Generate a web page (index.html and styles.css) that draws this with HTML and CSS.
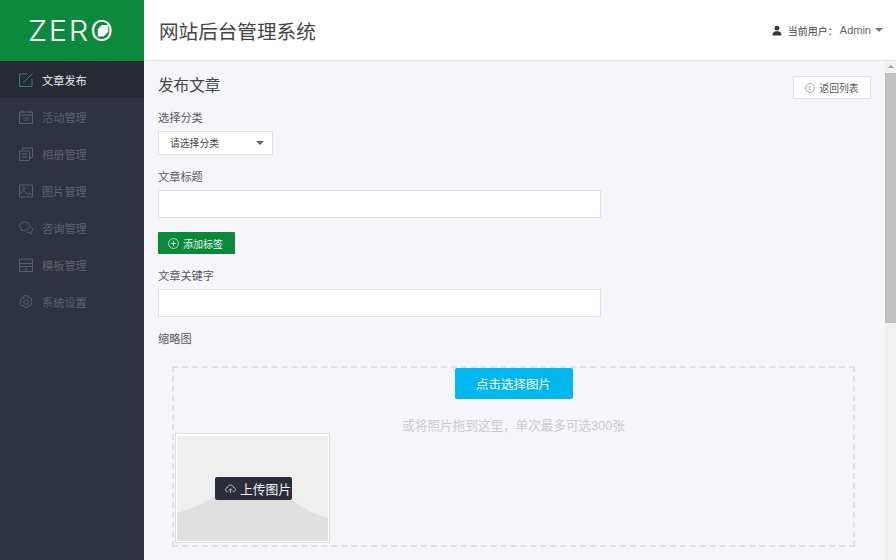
FILE: index.html
```html
<!DOCTYPE html>
<html lang="zh-CN">
<head>
    <meta charset="UTF-8">
    <title>网站后台管理系统</title>
    <link rel="stylesheet" href="styles.css">
</head>
<body>
    <div class="sidebar">
        <div class="logo"><span class="logo-text">ZERO</span></div>
        <ul class="nav">
            <li class="nav-item active">
                <svg class="nav-icon" viewBox="0 0 14 14"><path d="M13 6v7.500H.5V1H8"/><path d="M4.500 9.500 13.500.5"/></svg>
                文章发布
            </li>
            <li class="nav-item">
                <svg class="nav-icon" viewBox="0 0 14 14"><path d="M.5 2h13v11.500H.5z"/><path d="M3 .5V3M11 .5V3M.5 5h13"/><text class="cal-day" x="7" y="11" text-anchor="middle">28</text></svg>
                活动管理
            </li>
            <li class="nav-item">
                <svg class="nav-icon" viewBox="0 0 14 14"><path d="M.5 4h10v9.500H.5z"/><path d="M3.500 4V1h10v9.500h-3"/><path d="M3 7h5M3 10h5"/></svg>
                相册管理
            </li>
            <li class="nav-item">
                <svg class="nav-icon" viewBox="0 0 14 14"><path d="M.5 1h13v12H.5z"/><path d="M.5 10l4-3.500 4 4 2-1.500 3 2.500"/><circle cx="4.500" cy="4.500" r="1.200"/></svg>
                图片管理
            </li>
            <li class="nav-item">
                <svg class="nav-icon" viewBox="0 0 14 14"><path d="M5.500 1C8.300 1 10.500 2.900 10.500 5.200S8.300 9.400 5.500 9.400H2.600L3 8C1.500 7.300.5 6.300.5 5.200.5 2.900 2.700 1 5.500 1z"/><path d="M11.500 5.500c1.200.7 2 1.800 2 3 0 1-.6 2-1.500 2.600l.5 1.900-2.300-1.400c-1.200 0-2.300-.4-3-1.100"/></svg>
                咨询管理
            </li>
            <li class="nav-item">
                <svg class="nav-icon" viewBox="0 0 14 14"><path d="M.5 1h13v12.500H.5z"/><path d="M.5 5.500h13M.5 8.500h13M7 8.500v5"/></svg>
                模板管理
            </li>
            <li class="nav-item">
                <svg class="nav-icon" viewBox="0 0 14 14"><path d="M5.300.8h3.400l.7 1.700 1.800-.3 1.700 2.900-1.100 1.400 1.100 1.400-1.700 2.900-1.800-.3-.7 1.700H5.300l-.7-1.700-1.800.3L1.100 8.500l1.100-1.400-1.100-1.400 1.700-2.900 1.800.3z"/><circle cx="7" cy="7" r="2.300"/></svg>
                系统设置
            </li>
        </ul>
    </div>

    <div class="main">
        <div class="header">
            <div class="site-title">网站后台管理系统</div>
            <div class="user">
                <svg class="user-icon" viewBox="0 0 12 12"><circle cx="6" cy="3.200" r="2.900"/><path d="M.8 12V9.800C.8 8.300 2.500 7.300 4.200 6.800h3.600c1.700.5 3.400 1.500 3.400 3V12z"/></svg>
                <strong>当前用户：</strong>
                <span class="user-name">Admin</span>
                <span class="caret"></span>
            </div>
        </div>

        <div class="body-wrap">
            <div class="content">
                <div class="page-head">
                    <h1>发布文章</h1>
                    <div class="back-btn">
                        <svg class="back-icon" viewBox="0 0 12 12"><circle cx="6" cy="6" r="5.400"/><path d="M7 3.300 4.400 6 7 8.700"/></svg>
                        返回列表
                    </div>
                </div>

                <label class="field-label">选择分类</label>
                <div class="select">请选择分类<span class="caret dark"></span></div>

                <label class="field-label">文章标题</label>
                <input class="text-input" type="text">

                <div class="add-tag">
                    <svg class="add-icon" viewBox="0 0 12 12"><circle cx="6" cy="6" r="5.400"/><path d="M6 3v6M3 6h6"/></svg>
                    添加标签
                </div>

                <label class="field-label">文章关键字</label>
                <input class="text-input" type="text">

                <label class="field-label thumb-label">缩略图</label>
                <div class="dropzone">
                    <div class="pick-btn">点击选择图片</div>
                    <p class="hint">或将照片拖到这里，单次最多可选300张</p>
                    <div class="thumb">
                        <svg class="thumb-art" viewBox="0 0 151 105" preserveAspectRatio="none">
                            <rect width="151" height="105" fill="#efefef"/>
                            <path d="M0 77C14 73 28 67 38 60L114 63C124 71 136 78 151 82V105H0z" fill="#e0e0e0"/>
                        </svg>
                        <div class="upload-tag">
                            <svg class="cloud-icon" viewBox="0 0 12 12"><path d="M3.600 9.500H3C1.600 9.500.6 8.500.6 7.200.6 6 1.500 5 2.700 5 3 3.300 4.400 2.200 6 2.200c1.700 0 3.100 1.200 3.300 2.800 1.200.1 2.100 1 2.100 2.200 0 1.300-1 2.300-2.300 2.300h-.7"/><path d="M6 11V6.500M4.300 8 6 6.300 7.700 8"/></svg>
                            上传图片
                        </div>
                    </div>
                </div>
            </div>

            <div class="scrollbar">
                <span class="arrow up"></span>
                <div class="thumb-bar"></div>
            </div>
        </div>
    </div>
</body>
</html>
```

FILE: styles.css
```css
* {
    box-sizing: border-box;
}
html, body {
    height: 100%;
}
body {
    margin: 0;
    display: flex;
    height: 560px;
    overflow: hidden;
    font-family: "Liberation Sans", "Noto Sans CJK SC", sans-serif;
    color: #555;
    background-color: #f5f5fa;
}

/* sidebar */
.sidebar {
    width: 144px;
    flex-shrink: 0;
    background-color: #2f3340;
}
.logo {
    height: 61px;
    background-color: #0b8a3e;
    display: flex;
    align-items: center;
    justify-content: center;
}
.logo-text {
    position: relative;
    font-family: Inter, sans-serif;
    font-size: 28px;
    font-weight: 300;
    letter-spacing: 1.500px;
    line-height: 1;
    color: #fff;
    transform: scaleX(1.1);
}
/* the leaf inside the O */
.logo-text::after {
    content: "";
    position: absolute;
    right: 6px;
    top: 8px;
    width: 10px;
    height: 12px;
    background-color: #fff;
    clip-path: polygon(45% 0, 100% 0, 100% 60%, 55% 100%, 0 100%, 0 40%);
}
.nav {
    list-style: none;
    margin: 0;
    padding: 0;
}
.nav-item {
    height: 37px;
    display: flex;
    align-items: center;
    padding-left: 19px;
    font-size: 11.2px;
    color: #5d616c;
}
.nav-item.active {
    background-color: #272933;
    color: #f0f0f0;
}
.nav-icon {
    width: 14px;
    height: 14px;
    margin-right: 9px;
    fill: none;
    stroke: #5a5e6a;
    stroke-width: 1;
    overflow: visible;
}
.nav-item.active .nav-icon {
    stroke: #1f8a70;
}
.cal-day {
    font-size: 5px;
    fill: #5a5e6a;
    stroke: none;
}

/* header */
.main {
    flex: 1;
    display: flex;
    flex-direction: column;
    min-width: 0;
}
.header {
    height: 61px;
    flex-shrink: 0;
    background-color: #fff;
    border-bottom: 1px solid #e6e6e6;
    display: flex;
    align-items: center;
    justify-content: space-between;
    padding: 0 13px 0 15px;
}
.site-title {
    font-size: 19.6px;
    color: #444;
}
.user {
    display: flex;
    align-items: center;
    font-size: 10px;
    color: #444;
}
.user strong {
    font-weight: normal;
}
.user-icon {
    width: 10px;
    height: 11px;
    margin-right: 6px;
    fill: #3a3a3a;
}
.user-name {
    margin-left: 2px;
    margin-right: 4px;
    font-size: 11px;
    color: #666;
}
.caret {
    width: 0;
    height: 0;
    border-left: 4px solid transparent;
    border-right: 4px solid transparent;
    border-top: 4px solid #777;
}

/* content */
.body-wrap {
    flex: 1;
    display: flex;
    min-height: 0;
}
.content {
    flex: 1;
    min-width: 0;
    padding: 15px 14px 0 14px;
}
.page-head {
    display: flex;
    align-items: flex-start;
    justify-content: space-between;
    height: 23px;
}
.page-head h1 {
    margin: 0;
    font-size: 15.6px;
    line-height: 20px;
    font-weight: normal;
    color: #444;
}
.back-btn {
    width: 78px;
    height: 23px;
    background-color: #fff;
    border: 1px solid #e2e2e2;
    display: flex;
    align-items: center;
    justify-content: center;
    font-size: 9.800px;
    color: #555;
}
.back-icon {
    width: 10px;
    height: 10px;
    margin-right: 4px;
    fill: none;
    stroke: #777;
    stroke-width: 0.8;
}
.field-label {
    display: block;
    margin-top: 10px;
    margin-bottom: 4px;
    font-size: 11.2px;
    line-height: 18px;
    color: #5a5a5a;
}
.select {
    width: 115px;
    height: 24px;
    background-color: #fff;
    border: 1px solid #e2e2e2;
    display: flex;
    align-items: center;
    justify-content: space-between;
    padding: 0 8px 0 11px;
    font-size: 9.800px;
    color: #444;
}
.select + .field-label {
    margin-top: 13px;
}
.caret.dark {
    border-top-color: #666;
}
.text-input {
    display: block;
    width: 443px;
    height: 28px;
    background-color: #fff;
    border: 1px solid #e2e2e2;
    outline: none;
}
.add-tag {
    width: 77px;
    height: 22px;
    margin-top: 14px;
    padding-left: 10px;
    background-color: #0b8a3e;
    border-radius: 1px;
    display: flex;
    align-items: center;
    font-size: 10px;
    color: #e8f5ed;
}
.add-icon {
    width: 11px;
    height: 11px;
    margin-right: 4px;
    fill: none;
    stroke: #e8f5ed;
    stroke-width: 0.8;
}
.add-tag + .field-label {
    margin-top: 13px;
}
.text-input + .thumb-label {
    margin-top: 13px;
    margin-bottom: 18px;
}
.dropzone {
    margin: 0 16px 0 14px;
    height: 181px;
    border: 2px dashed #e2e2e2;
    padding: 0 1px;
    display: flex;
    flex-direction: column;
}
.pick-btn {
    width: 118px;
    height: 31px;
    align-self: center;
    background-color: #00b7ee;
    border-radius: 2px;
    display: flex;
    align-items: center;
    justify-content: center;
    font-size: 12.500px;
    color: #fff;
}
.hint {
    margin: 19px 0 -1px;
    text-align: center;
    font-size: 12.600px;
    line-height: 16px;
    color: #ccc;
}
.thumb {
    position: relative;
    width: 155px;
    height: 110px;
    background-color: #fff;
    border: 1px solid #ddd;
    padding: 2px 1px 1px;
}
.thumb-art {
    display: block;
    width: 100%;
    height: 100%;
}
.upload-tag {
    position: absolute;
    left: 39px;
    top: 43px;
    width: 77px;
    height: 23px;
    padding: 0 0 1px 10px;
    background-color: #2b2e3a;
    border-radius: 2px;
    display: flex;
    align-items: center;
    font-size: 12.800px;
    color: #f2f2f2;
    white-space: nowrap;
}
.cloud-icon {
    width: 11px;
    height: 11px;
    margin-right: 4px;
    fill: none;
    stroke: #ddd;
    stroke-width: 0.9;
}

/* scrollbar */
.scrollbar {
    width: 11px;
    flex-shrink: 0;
    background-color: #f1f1f1;
    display: flex;
    flex-direction: column;
    align-items: center;
}
.arrow.up {
    margin-top: 4px;
    margin-bottom: 5px;
    width: 0;
    height: 0;
    border-left: 3px solid transparent;
    border-right: 3px solid transparent;
    border-bottom: 3px solid #a3a3a3;
}
.thumb-bar {
    width: 100%;
    height: 250px;
    background-color: #c1c1c1;
}
```
